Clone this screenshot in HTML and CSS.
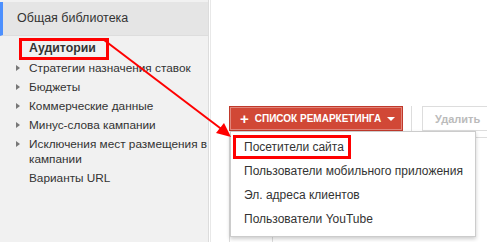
FILE: index.html
```html
<!DOCTYPE html>
<html lang="ru">
<head>
  <meta charset="UTF-8" />
  <meta name="viewport" content="width=device-width, initial-scale=1.0"/>
  <title>Общая библиотека</title>
  <link rel="stylesheet" href="styles.css">
</head>
<body>

  <div class="page">

    <div class="sidebar">
      <div class="sidebar-title">Общая библиотека</div>
      <ul class="nav">
        <li class="nav-item"><span class="mark mark-nav"><b>Аудитории</b></span></li>
        <li class="nav-item has-sub">Стратегии назначения ставок</li>
        <li class="nav-item has-sub">Бюджеты</li>
        <li class="nav-item has-sub">Коммерческие данные</li>
        <li class="nav-item has-sub">Минус-слова кампании</li>
        <li class="nav-item has-sub">Исключения мест размещения в кампании</li>
        <li class="nav-item">Варианты URL</li>
      </ul>
    </div>

    <div class="main">
      <div class="toolbar">
        <div class="dropdown">
          <button class="btn-red"><span class="plus">+</span>Список ремаркетинга<span class="caret"></span></button>
          <ul class="menu">
            <li class="menu-item"><span class="mark mark-menu">Посетители сайта</span></li>
            <li class="menu-item">Пользователи мобильного приложения</li>
            <li class="menu-item">Эл. адреса клиентов</li>
            <li class="menu-item">Пользователи YouTube</li>
          </ul>
        </div>
        <div class="sep"></div>
        <button class="btn-grey">Удалить</button>
      </div>

      <div class="table">
        <div class="cell cell-check"></div>
        <div class="cell"></div>
      </div>
    </div>

    <!-- стрелка-аннотация -->
    <svg class="arrow" width="487" height="242" viewBox="0 0 487 242">
      <line x1="104" y1="40" x2="224" y2="131" stroke="#f00" stroke-width="2"/>
      <polygon points="231,137 216,133 224,123" fill="#f00"/>
    </svg>

  </div>

</body>
</html>
```

FILE: styles.css
```css
body {
  margin: 0;
  font-family: "Liberation Sans", Arial, sans-serif;
  font-size: 12px;
  color: #333;
  background: #fff;
}

.page {
  position: relative;
  display: flex;
  width: 487px;
  height: 242px;
  overflow: hidden;
}

.sidebar {
  width: 208px;
  flex-shrink: 0;
  background: #f1f1f1;
  border-right: 1px solid #dcdcdc;
}

.sidebar-title {
  margin-top: 2px;
  height: 33px;
  line-height: 33px;
  padding-left: 14px;
  background: #e5e5e5;
  border-left: 3px solid #4d90fe;
  border-bottom: 1px solid #ddd;
  font-size: 12.5px;
  color: #333;
}

.nav {
  list-style: none;
  margin: 0;
  padding: 3px 0 0 29px;
}

.nav-item {
  position: relative;
  padding: 2px 0;
  line-height: 15px;
  font-size: 11.8px;
}

.has-sub::before {
  content: "";
  position: absolute;
  left: -13px;
  top: 6px;
  border-left: 4px solid #777;
  border-top: 3px solid transparent;
  border-bottom: 3px solid transparent;
}

.mark {
  outline: 3px solid #f00;
}

.mark-nav {
  display: inline-block;
  padding: 0 10px 1px 7px;
  margin-left: -7px;
  font-size: 12.3px;
}

.mark-menu {
  display: inline-block;
  line-height: 18px;
  padding: 0 4px 0 8px;
  margin-left: -8px;
}

.main {
  flex: 1;
  margin-left: 1px;
  border-left: 1px solid #e8e8e8;
}

.toolbar {
  display: flex;
  align-items: center;
  padding: 106px 0 0 18px;
}

.dropdown {
  position: relative;
}

.btn-red {
  display: flex;
  align-items: center;
  height: 25px;
  width: 174px;
  padding: 0 0 0 10px;
  white-space: nowrap;
  background: #d14836;
  border: 1px solid #c0392b;
  box-shadow: inset 0 0 0 1px rgba(255, 255, 255, 0.35);
  color: #fff;
  font-family: inherit;
  font-size: 10px;
  font-weight: bold;
  text-transform: uppercase;
}

.plus {
  font-size: 15px;
  margin-right: 6px;
}

.caret {
  margin-left: 6px;
  border-top: 4px solid #fff;
  border-left: 4px solid transparent;
  border-right: 4px solid transparent;
}

.menu {
  position: absolute;
  top: 25px;
  left: 1px;
  width: 244px;
  margin: 0;
  padding: 3px 0 5px;
  list-style: none;
  background: #fff;
  border: 1px solid rgba(0, 0, 0, 0.2);
  box-shadow: 0 2px 4px rgba(0, 0, 0, 0.2);
  z-index: 2;
}

.menu-item {
  line-height: 24px;
  padding-left: 13px;
  white-space: nowrap;
  font-size: 12px;
}

.sep {
  width: 1px;
  height: 25px;
  margin: 0 10px 0 8px;
  background: #ddd;
}

.btn-grey {
  height: 25px;
  width: 80px;
  flex-shrink: 0;
  padding: 0 0 0 12px;
  text-align: left;
  background: #fff;
  border: 1px solid #ddd;
  color: #bbb;
  font-family: inherit;
  font-size: 11px;
  font-weight: bold;
}

.table {
  display: flex;
  height: 110px;
  margin: 6px 0 0 18px;
  border-left: 1px solid #ddd;
  border-top: 1px solid #ddd;
}

.cell-check {
  width: 42px;
  border-right: 1px solid #ddd;
}

.arrow {
  position: absolute;
  top: 0;
  left: 0;
  z-index: 3;
  pointer-events: none;
}
```
